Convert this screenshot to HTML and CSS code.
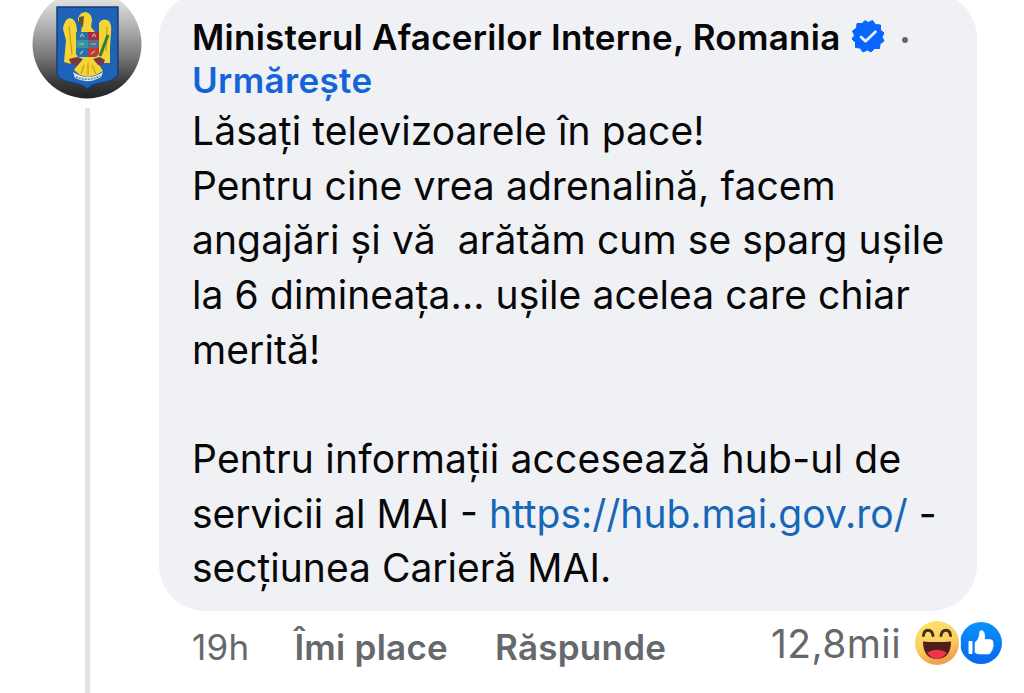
FILE: index.html
```
<!DOCTYPE html>
<html lang="ro">
<head>
  <meta charset="UTF-8">
  <meta name="viewport" content="width=device-width, initial-scale=1.0">
  <title>Comentariu</title>
  <link rel="stylesheet" href="styles.css">
</head>
<body>
  <div class="comment">
    <div class="side">
      <svg class="avatar" viewBox="0 0 110 110">
        <defs>
          <linearGradient id="silver" x1="0" y1="0" x2="0" y2="1">
            <stop offset="0" stop-color="#f2f2f2"/>
            <stop offset=".3" stop-color="#b9b9b9"/>
            <stop offset=".6" stop-color="#7b7b7b"/>
            <stop offset=".85" stop-color="#3a3a3a"/>
            <stop offset="1" stop-color="#222"/>
          </linearGradient>
        </defs>
        <circle cx="55" cy="55" r="54.500" fill="url(#silver)"/>
        <path d="M25 18H86V86Q83 92 68 94Q59 96 55.500 100Q51 96 42 94Q28 92 25 86Z" fill="#1f63b8" stroke="#173f75" stroke-width="1.500"/>
        <!-- eagle -->
        <path d="M49 43L50 37Q46 34 46 29Q48 23 54 23Q60 25 60 31L59 38L63 43H67L67 34Q71 28 77 32Q80 37 79 43L78 58L78 74L72 74L67 68L61 70Q68 76 71 82L64 86L56 88L48 86L42 81Q46 75 51 70L46 68L39 75L32 73L34 51L31 40Q32 30 38 29Q45 30 45 43Z" fill="#f5d433"/>
        <path d="M37 37L40 66M75 38L74 62M52 76L49 85M56 74V87M60 76L64 85" stroke="#c39a27" stroke-width="1.200" fill="none"/>
        <path d="M47 28L52 27L51 38L47 35Z" fill="#66513f"/>
        <path d="M37 70L45 68L50 71L45 77L39 75ZM62 71L68 68L73 71L71 76L66 76Z" fill="#783844"/>
        <path d="M68 67L76 46" stroke="#317b37" stroke-width="3"/>
        <path d="M44 43H56V51H44Z" fill="#2870a8"/>
        <path d="M56 43H67V51H56Z" fill="#a92844"/>
        <path d="M44 51H56V59H44Z" fill="#3d93a0"/>
        <path d="M56 51H67V59H56Z" fill="#526f91"/>
        <path d="M44 59H56V68H46L44 65Z" fill="#286fb1"/>
        <path d="M56 59H67V65L64 68H56Z" fill="#c43736"/>
        <path d="M48 48L50 45L52 48M60 48L62 45L64 48M47 55H52M59 55H64M48 65L51 62M59 65L63 62" stroke="#a9c5a4" stroke-width="1.200" fill="none"/>
        <path d="M41 83Q56 93 71 83L69 88Q56 96 43 89Z" fill="#dce9ef"/>
        <path d="M44 88Q56 93 68 87" stroke="#637d98" stroke-width="1.500" stroke-dasharray="2 1" fill="none"/>
      </svg>
      <div class="thread"></div>
    </div>
    <div class="main">
      <div class="bubble">
        <div class="author">
          <span class="name">Ministerul Afacerilor Interne, Romania</span>
          <svg class="verified" viewBox="0 0 34 34">
            <path d="M17 3.500L21.500 1.500L24.500 5.500L29.500 6L29.500 11L33 14L31 18L33 22L29 25L28.500 29.500L23.500 29.500L20 33L16.500 31L12 33L9 29L4.500 28.500L4.500 23.500L1 20L3.500 16.500L1.500 12L5.500 9L6 4.500L11 4.500L14 1.500Z" fill="#0866ff" stroke="#0866ff" stroke-width="1" stroke-linejoin="round"/>
            <path d="M10 18L14.500 22.300L24.500 12.700" fill="none" stroke="#eef4ff" stroke-width="2.600" stroke-linecap="round" stroke-linejoin="round"/>
          </svg>
          <span class="dot"></span>
        </div>
        <div class="follow">Urmărește</div>
        <div class="text">
          <div>Lăsați televizoarele în pace!</div>
          <div>Pentru cine vrea adrenalină, facem</div>
          <div>angajări și vă&nbsp; arătăm cum se sparg ușile</div>
          <div>la 6 dimineața... ușile acelea care chiar</div>
          <div>merită!</div>
          <br>
          <div class="wide">Pentru informații accesează hub-ul de</div>
          <div class="tight">servicii al MAI - <a class="link">https://hub.mai.gov.ro/</a> -</div>
          <div class="tight">secțiunea Carieră MAI.</div>
        </div>
      </div>
      <div class="actions">
        <span class="time">19h</span>
        <span class="like">Îmi place</span>
        <span class="reply">Răspunde</span>
        <div class="reacted">
          <span class="count">12,8mii</span>
          <svg class="reactions" viewBox="0 0 88 46">
            <defs>
              <linearGradient id="yellow" x1="0" y1="0" x2=".3" y2="1">
                <stop offset="0" stop-color="#ffe568"/>
                <stop offset=".6" stop-color="#fbcf61"/>
                <stop offset="1" stop-color="#f2a04f"/>
              </linearGradient>
              <linearGradient id="blue" x1="0" y1="0" x2="0" y2="1">
                <stop offset="0" stop-color="#0a91fb"/>
                <stop offset="1" stop-color="#0868ee"/>
              </linearGradient>
            </defs>
            <circle cx="66" cy="23" r="21" fill="url(#blue)"/>
            <circle cx="22" cy="23" r="24" fill="#fff"/>
            <circle cx="22" cy="23" r="22" fill="url(#yellow)"/>
            <path d="M8.500 15.500C9 8.500 17 8.500 18 15.500M26 15.500C27 8.500 35 8.500 35.500 15.500" fill="none" stroke="#403018" stroke-width="3" stroke-linecap="round"/>
            <path d="M8 21.500Q22 22.500 36 21.500C36 34 30 39 22 39S8 34 8 21.500Z" fill="#4a2019"/>
            <path d="M12 32.500Q22 27 32 32.500Q28 39 22 39T12 32.500Z" fill="#ee3449"/>
            <path d="M54 21.500H57V33.500H54Z" fill="#fff" stroke="#fff" stroke-linejoin="round"/>
            <path d="M60 22.500Q64.500 19 64.500 13Q64.500 10.500 66.500 10.500Q70.500 11 69.500 19.500H75.500Q78.500 20 78 23.500Q79 26 77.500 28Q77.500 30.500 76 31.500Q75.500 34 73 34H65Q62 34 60 32.500Z" fill="#fff" stroke="#fff" stroke-width=".6" stroke-linejoin="round"/>
          </svg>
        </div>
      </div>
    </div>
  </div>
</body>
</html>
```

FILE: styles.css
```
* {
  box-sizing: border-box;
}
body {
  margin: 0;
  background: #fff;
  color: #080809;
  font-family: Inter, "Liberation Sans", sans-serif;
  overflow: hidden;
}
.comment {
  display: flex;
  height: 693px;
}
.side {
  width: 159px;
  flex: none;
  display: flex;
  flex-direction: column;
  padding-left: 32px;
}
.avatar {
  width: 110px;
  height: 110px;
  margin-top: -11px;
  flex: none;
}
.thread {
  width: 5px;
  margin: 9px 0 0 53px;
  flex: 1;
  background: #e3e3e4;
}
.bubble {
  width: 818px;
  height: 619px;
  margin-top: -8px;
  padding: 24px 0 0 33px;
  border-radius: 46px;
  background: #f0f1f5;
}
.author {
  display: flex;
  align-items: center;
  height: 43px;
}
.name,
.follow {
  font-size: 35px;
  line-height: 43px;
  font-weight: 600;
  letter-spacing: 0.26px;
  white-space: nowrap;
}
.verified {
  width: 34px;
  height: 34px;
  margin-left: 10px;
  margin-top: -3px;
}
.dot {
  width: 6px;
  height: 6px;
  margin: 4px 0 0 17px;
  border-radius: 50%;
  background: #65686c;
}
.follow {
  color: #1464d8;
  letter-spacing: 0.35px;
}
.text {
  margin-top: 2px;
  font-size: 39px;
  line-height: 54.67px;
  letter-spacing: 0.09px;
  white-space: nowrap;
}
.text .wide {
  letter-spacing: 0.19px;
}
.text .tight {
  letter-spacing: 0;
}
.link {
  color: #1767b8;
}
.actions {
  display: flex;
  align-items: center;
  width: 846px;
  height: 72px;
  padding-left: 33px;
  color: #65686c;
  font-size: 35px;
  letter-spacing: 0.25px;
  white-space: nowrap;
}
.like,
.reply {
  font-weight: 600;
}
.like {
  margin-left: 45px;
}
.reply {
  margin-left: 47px;
}
.reacted {
  display: flex;
  align-items: center;
  margin: 0 2px 8px auto;
}
.count {
  font-size: 39px;
  letter-spacing: 0.4px;
}
.reactions {
  width: 88px;
  height: 46px;
  margin-left: 14px;
}
```
